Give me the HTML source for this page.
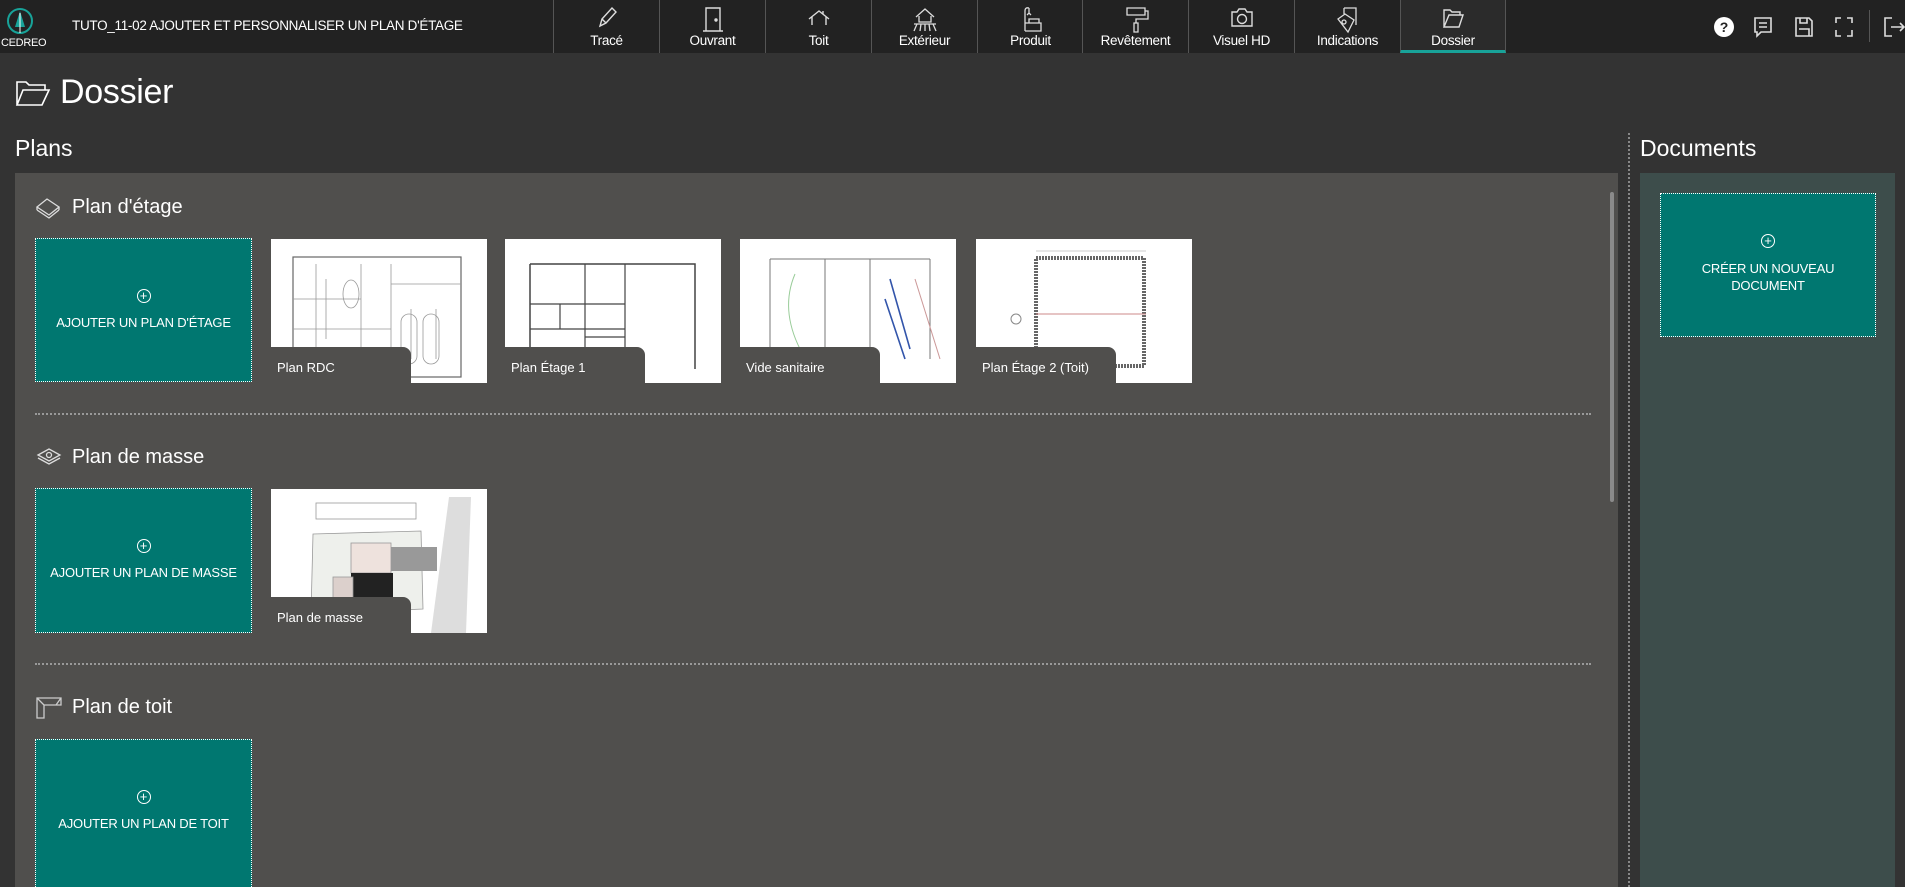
<!DOCTYPE html>
<html style="overflow:hidden"><head><meta charset="utf-8">
<style>
*{margin:0;padding:0;box-sizing:border-box}
html,body{width:1905px;height:887px;overflow:hidden}
body{background:#333;font-family:"Liberation Sans",sans-serif;color:#fff;position:relative}
.abs{position:absolute}
#hdr{left:0;top:0;width:1905px;height:53px;background:#222}
.tab{position:absolute;top:0;height:53px;width:106px;text-align:center;font-size:13.5px;border-left:1px solid #555}
.tab svg{position:absolute;left:50%;top:5px;transform:translateX(-50%)}
.tab span{position:absolute;left:0;right:0;top:33px;letter-spacing:-.3px}
.sel{background:#2b2b2b;border-bottom:3px solid #18a399}
.add{position:absolute;background:#007770;border:1px dotted #fff;text-align:center;font-size:13px;letter-spacing:-.2px}
.add .c{display:block;margin:0 auto;width:14px;height:14px;border:1.4px solid #fff;border-radius:50%;font-size:13px;line-height:11px}
.th{position:absolute;background:#fff;width:216px;height:144px;overflow:hidden}
.th .lb{position:absolute;left:0;bottom:0;height:36px;background:#504f4d;border-top-right-radius:8px;font-size:13px;padding:13px 0 0 6px;color:#fff}
.sep{position:absolute;left:35px;width:1556px;height:0;border-top:2px dotted #999}
.h2{position:absolute;font-size:20px}
</style></head><body>
<div id="hdr" class="abs">
 <svg class="abs" style="left:6px;top:5px" width="28" height="36" viewBox="0 0 28 36"><circle cx="14" cy="16" r="12" fill="none" stroke="#18a399" stroke-width="2"/><path d="M14 6 L9 22 L19 22 Z" fill="#18a399"/><path d="M14 8 V28" stroke="#fff" stroke-width="1"/></svg>
 <div class="abs" style="left:1px;top:37px;font-size:11px;letter-spacing:-.3px">CEDREO</div>
 <div class="abs" style="left:72px;top:18px;font-size:13.5px;letter-spacing:-.3px">TUTO_11-02 AJOUTER ET PERSONNALISER UN PLAN D'ÉTAGE</div>
 <div class="tab" style="left:553px"><svg width="26" height="26" viewBox="0 0 26 26" fill="none" stroke="#ddd" stroke-width="1.4"><path d="M6 21 L8 14 L18 3 L22 7 L12 18 Z M8 14 L12 18"/></svg><span>Tracé</span></div>
 <div class="tab" style="left:659px"><svg width="26" height="28" viewBox="0 0 26 28" fill="none" stroke="#ddd" stroke-width="1.4"><path d="M6 26 V3 H20 V26 M3 26 H23"/><circle cx="16" cy="15" r="1" fill="#ddd"/></svg><span>Ouvrant</span></div>
 <div class="tab" style="left:765px"><svg width="26" height="26" viewBox="0 0 26 26" fill="none" stroke="#ddd" stroke-width="1.4"><path d="M3 14 L13 6 L23 14 M6 12 V20 M20 12 V20 M17 6 V9"/></svg><span>Toit</span></div>
 <div class="tab" style="left:871px"><svg width="28" height="28" viewBox="0 0 28 28" fill="none" stroke="#ddd" stroke-width="1.3"><path d="M5 12 L14 4 L23 12 M8 11 V17 H20 V11 M3 19 H25 M6 19 L3 26 M10 19 L9 26 M14 19 V26 M18 19 L19 26 M22 19 L25 26"/></svg><span>Extérieur</span></div>
 <div class="tab" style="left:977px"><svg width="28" height="28" viewBox="0 0 28 28" fill="none" stroke="#ddd" stroke-width="1.3"><path d="M8 26 V6 Q8 2 12 3 M12 3 V8 M10 10 L12 8 L14 10 M8 18 H24 V26 H8 M12 18 V14 H22 V18"/></svg><span>Produit</span></div>
 <div class="tab" style="left:1082px"><svg width="28" height="28" viewBox="0 0 28 28" fill="none" stroke="#ddd" stroke-width="1.3"><path d="M5 3 H23 V10 H5 Z M23 6 H26 V14 H14 V18 M12 18 H16 V27 H12 Z"/></svg><span>Revêtement</span></div>
 <div class="tab" style="left:1188px"><svg width="26" height="26" viewBox="0 0 26 26" fill="none" stroke="#ddd" stroke-width="1.4"><path d="M3 7 H8 L10 4 H16 L18 7 H23 V21 H3 Z"/><circle cx="13" cy="14" r="4.5"/></svg><span>Visuel HD</span></div>
 <div class="tab" style="left:1294px"><svg width="28" height="30" viewBox="0 0 28 30" fill="none" stroke="#ddd" stroke-width="1.3"><path d="M10 3 H22 V20 M10 3 V9 M4 14 L11 9 L20 15 L14 27 Z"/><circle cx="10" cy="17" r="2"/></svg><span>Indications</span></div>
 <div class="tab sel" style="left:1400px;border-right:1px solid #555"><svg width="26" height="26" viewBox="0 0 26 26" fill="none" stroke="#ddd" stroke-width="1.4"><path d="M4 22 V5 H10 L12 7 H20 V10 M4 22 L9 10 H23 L19 22 Z"/></svg><span>Dossier</span></div>
 <svg class="abs" style="left:1714px;top:17px" width="20" height="20"><circle cx="10" cy="10" r="10" fill="#fff"/><text x="10" y="15" font-size="14" font-weight="bold" text-anchor="middle" fill="#222" font-family="Liberation Sans">?</text></svg>
 <svg class="abs" style="left:1752px;top:15px" width="22" height="24" fill="none" stroke="#ddd" stroke-width="1.6"><path d="M3 3 H19 V17 H9 L5 21 V17 H3 Z M7 8 H15 M7 12 H15"/></svg>
 <svg class="abs" style="left:1793px;top:15px" width="22" height="24" fill="none" stroke="#ddd" stroke-width="1.6"><path d="M3 3 H16 L19 6 V21 H3 Z M7 3 V8 H14 V3 M6 14 H16 V21"/></svg>
 <svg class="abs" style="left:1833px;top:15px" width="22" height="24" fill="none" stroke="#ddd" stroke-width="1.6"><path d="M3 8 V3 H8 M14 3 H19 V8 M19 15 V21 H14 M8 21 H3 V15"/></svg>
 <div class="abs" style="left:1869px;top:10px;width:1px;height:32px;background:#555"></div>
 <svg class="abs" style="left:1882px;top:15px" width="23" height="24" fill="none" stroke="#ddd" stroke-width="1.6"><path d="M10 3 H3 V21 H10 M9 12 H22 M18 8 L22 12 L18 16"/></svg>
</div>
<svg class="abs" style="left:15px;top:80px" width="36" height="27" fill="none" stroke="#fff" stroke-width="1.6"><path d="M2 25 V2 H11 L14 5 H30 V10 M2 25 L8 10 H34 L27 25 Z"/></svg>
<div class="abs" style="left:60px;top:73px;font-size:34px;letter-spacing:-.3px">Dossier</div>
<div class="abs" style="left:15px;top:135px;font-size:23px">Plans</div>
<div class="abs" style="left:1640px;top:135px;font-size:23px">Documents</div>
<div class="abs" style="left:1628px;top:133px;height:754px;border-left:2px dotted #888"></div>
<div class="abs" style="left:15px;top:173px;width:1603px;height:714px;background:#504f4d"></div>
<div class="abs" style="left:1610px;top:192px;width:4px;height:310px;background:#8a8a8a;border-radius:2px"></div>
<div class="abs" style="left:1640px;top:173px;width:255px;height:714px;background:#3d4d4b"></div>
<div class="add" style="left:1660px;top:193px;width:216px;height:144px;padding-top:40px;line-height:17px"><span class="c">+</span><div style="margin-top:12px">CRÉER UN NOUVEAU<br>DOCUMENT</div></div>

<svg class="abs" style="left:35px;top:197px" width="26" height="22" fill="none" stroke="#ddd" stroke-width="1.3"><path d="M2 10 L12 2 L24 10 L14 18 Z M2 13 L14 21 L24 13 M2 10 V13 M24 10 V13"/></svg>
<div class="h2" style="left:72px;top:196px">Plan d'étage</div>
<div class="add" style="left:35px;top:238px;width:217px;height:144px;padding-top:50px"><span class="c">+</span><div style="margin-top:12px">AJOUTER UN PLAN D'ÉTAGE</div></div>

<div class="th" style="left:271px;top:239px"><svg width="216" height="144" fill="none" stroke="#999" stroke-width=".8"><rect x="22" y="18" width="168" height="120" stroke="#666" stroke-width="1.2"/><path d="M45 25 V130 M90 25 V130 M120 25 V130 M22 60 H90 M22 90 H120 M120 45 H190 M55 40 V100 M140 70 V120 M165 70 V120"/><ellipse cx="80" cy="55" rx="8" ry="14"/><rect x="130" y="75" width="16" height="50" rx="8"/><rect x="152" y="75" width="16" height="50" rx="8"/></svg><div class="lb" style="width:140px">Plan RDC</div></div>
<div class="th" style="left:505px;top:239px"><svg width="216" height="144" fill="none" stroke="#666" stroke-width="1"><path d="M25 25 H190 V130 M25 25 V130" stroke="#444" stroke-width="1.5"/><path d="M25 65 H120 M80 25 V130 M120 25 V130 M55 65 V90 M25 90 H120 M80 98 H120" stroke="#444" stroke-width="1.2"/></svg><div class="lb" style="width:140px">Plan Étage 1</div></div>
<div class="th" style="left:740px;top:239px"><svg width="216" height="144" fill="none" stroke="#777" stroke-width="1"><path d="M30 20 H190 M30 20 V120 M85 20 V120 M130 20 V120 M190 20 V120"/><path d="M55 35 Q40 70 60 110" stroke="#9c9"/><path d="M150 40 L170 110 M145 60 L165 120" stroke="#35a" stroke-width="1.6"/><path d="M175 40 L200 120" stroke="#c99"/></svg><div class="lb" style="width:140px">Vide sanitaire</div></div>
<div class="th" style="left:976px;top:239px"><svg width="216" height="144" fill="none" stroke="#333"><rect x="60" y="19" width="108" height="108" stroke="#666" stroke-width="4" stroke-dasharray="2 1"/><path d="M60 75 H170" stroke="#c88"/><path d="M60 12 H170" stroke="#ccc"/><circle cx="40" cy="80" r="5" stroke="#888"/></svg><div class="lb" style="width:140px">Plan Étage 2 (Toit)</div></div>

<div class="sep" style="top:413px"></div>
<svg class="abs" style="left:36px;top:446px" width="26" height="20" fill="none" stroke="#ddd" stroke-width="1.3"><path d="M2 9 L13 3 L24 9 L13 15 Z M2 12 L13 18 L24 12"/><circle cx="13" cy="9" r="2.5"/></svg>
<div class="h2" style="left:72px;top:446px">Plan de masse</div>
<div class="add" style="left:35px;top:488px;width:217px;height:145px;padding-top:50px"><span class="c">+</span><div style="margin-top:12px">AJOUTER UN PLAN DE MASSE</div></div>
<div class="th" style="left:271px;top:489px"><svg width="216" height="144" fill="none" stroke="#999" stroke-width=".8"><rect x="45" y="14" width="100" height="16"/><path d="M42 45 L150 42 L152 120 L40 125 Z" fill="#eef0ec"/><rect x="80" y="54" width="40" height="30" fill="#eee2dd"/><rect x="80" y="84" width="42" height="44" fill="#222" stroke="none"/><rect x="62" y="88" width="20" height="30" fill="#dcd0cc"/><rect x="120" y="58" width="46" height="24" fill="#999" stroke="none"/><path d="M178 8 L200 8 L195 144 L160 144 Z" fill="#ddd" stroke="none"/></svg><div class="lb" style="width:140px">Plan de masse</div></div>

<div class="sep" style="top:663px"></div>
<svg class="abs" style="left:36px;top:697px" width="26" height="22" fill="none" stroke="#ccc" stroke-width="1.3"><path d="M1 1 H25 V8 H8 V21 H1 Z M1 1 L8 8 M25 1 L20 8"/></svg>
<div class="h2" style="left:72px;top:696px">Plan de toit</div>
<div class="add" style="left:35px;top:739px;width:217px;height:148px;padding-top:50px;border-bottom:none"><span class="c">+</span><div style="margin-top:12px">AJOUTER UN PLAN DE TOIT</div></div>
</body></html>
